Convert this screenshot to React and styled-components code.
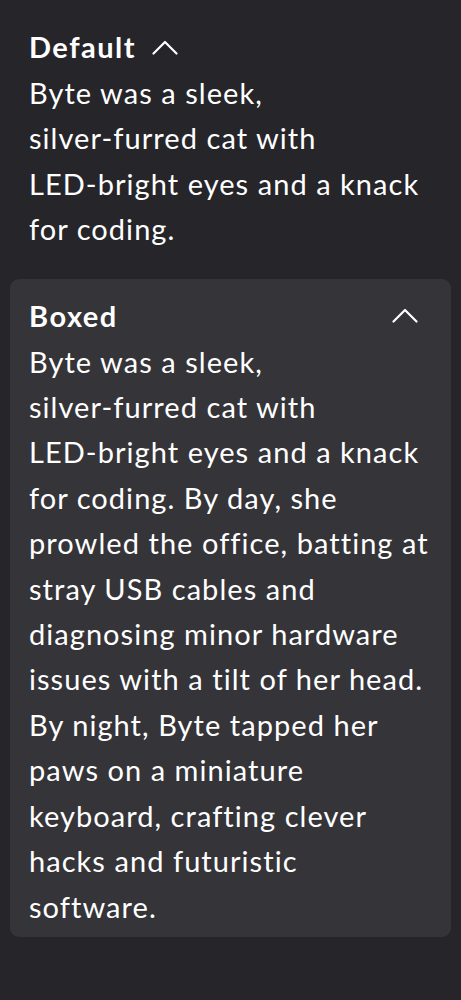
import React from "react";
import styled, { createGlobalStyle } from "styled-components";

const Global = createGlobalStyle`
  html, body {
    margin: 0;
    padding: 0;
    background: #26252a;
  }
  body {
    font-family: Lato, "Open Sans", sans-serif;
    color: #ffffff;
    -webkit-font-smoothing: antialiased;
  }
`;

const Page = styled.div`
  display: flex;
  flex-direction: column;
  gap: 19px;
  padding: 10px;
  min-height: 1000px;
  box-sizing: border-box;
  background: #26252a;
`;

const Item = styled.section`
  padding: 14px 19px 8px;
  border-radius: 9px;
  background: ${(p) => (p.$boxed ? "#353439" : "transparent")};
`;

const Header = styled.div`
  display: flex;
  align-items: center;
  justify-content: ${(p) => (p.$boxed ? "space-between" : "flex-start")};
  gap: 16px;
  padding-right: ${(p) => (p.$boxed ? "14px" : "0")};
`;

const Title = styled.h3`
  margin: 0;
  font-size: 29px;
  font-weight: 700;
  line-height: 46px;
  letter-spacing: 1.5px;
  color: #ffffff;
`;

const Body = styled.p`
  margin: 0;
  font-size: 29px;
  font-weight: 400;
  line-height: 45.4px;
  letter-spacing: 1.05px;
  color: #ffffff;
`;

const Word = styled.span`
  white-space: nowrap;
`;

const ChevronSvg = styled.svg`
  width: 26px;
  height: 15px;
  flex: none;
`;

const Chevron = () => (
  <ChevronSvg viewBox="0 0 26 15" fill="none">
    <path
      d="M1.5 13.5 L13 2 L24.5 13.5"
      stroke="#ffffff"
      strokeWidth="2.2"
      strokeLinecap="round"
      strokeLinejoin="round"
    />
  </ChevronSvg>
);

const Intro = () => (
  <>
    Byte was a sleek, <Word>silver-furred</Word> cat with <Word>LED-bright</Word>{" "}
    eyes and a knack for coding.
  </>
);

const Accordion = ({ title, children, boxed }) => (
  <Item $boxed={boxed}>
    <Header $boxed={boxed}>
      <Title>{title}</Title>
      <Chevron />
    </Header>
    <Body>{children}</Body>
  </Item>
);

export default function App() {
  return (
    <>
      <Global />
      <Page>
        <Accordion title="Default">
          <Intro />
        </Accordion>
        <Accordion title="Boxed" boxed>
          <Intro /> By day, she prowled the office, batting at stray USB cables and
          diagnosing minor hardware issues with a tilt of her head. By night, Byte
          tapped her paws on a miniature keyboard, crafting clever hacks and
          futuristic software.
        </Accordion>
      </Page>
    </>
  );
}
